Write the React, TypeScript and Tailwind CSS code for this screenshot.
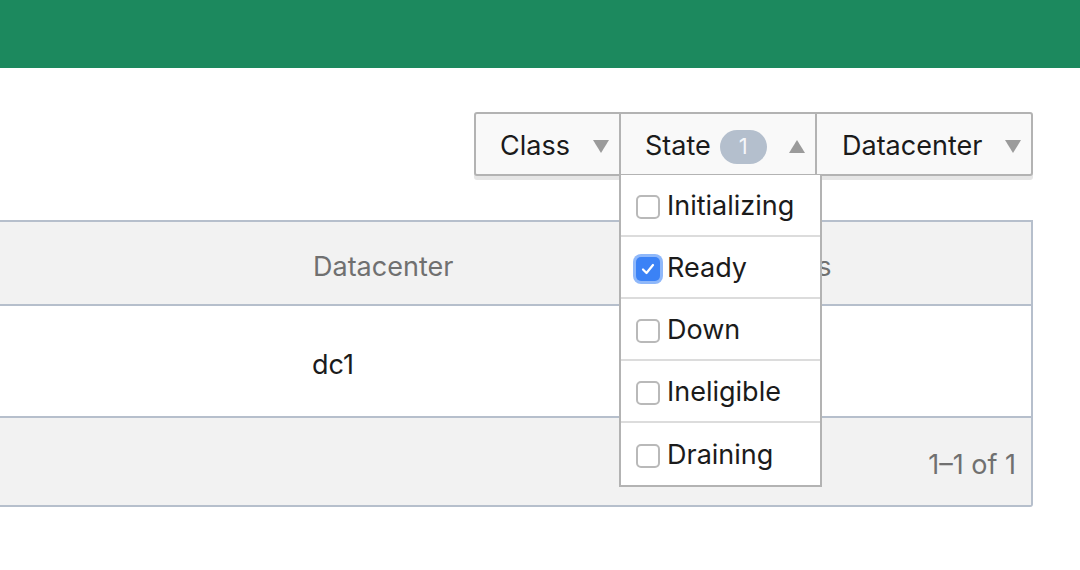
import React from 'react';

const font = { fontFamily: 'Inter, "Noto Sans", sans-serif' };

function Caret({ up }: { up?: boolean }) {
  return (
    <svg width="16" height="13" viewBox="0 0 16 13" className="shrink-0">
      {up ? <polygon points="8,0 16,13 0,13" fill="#9b9b9b" /> : <polygon points="0,0 16,0 8,13" fill="#9b9b9b" />}
    </svg>
  );
}

function Checkbox({ checked }: { checked?: boolean }) {
  if (checked) {
    return (
      <span className="flex h-[24px] w-[24px] shrink-0 items-center justify-center rounded-[5px] bg-[#3b82f6] ring-[3px] ring-[#8fb8fa]">
        <svg width="14" height="12" viewBox="0 0 14 12">
          <path d="M2 6.5 L5.5 10 L12 2" stroke="white" strokeWidth="2.2" fill="none" strokeLinecap="round" strokeLinejoin="round" />
        </svg>
      </span>
    );
  }
  return <span className="block h-[24px] w-[24px] shrink-0 rounded-[5px] border-2 border-[#b9b9b9] bg-white" />;
}

const states = [
  { label: 'Initializing', checked: false },
  { label: 'Ready', checked: true },
  { label: 'Down', checked: false },
  { label: 'Ineligible', checked: false },
  { label: 'Draining', checked: false },
];

export default function App() {
  return (
    <div className="relative h-[570px] w-[1080px] overflow-hidden bg-white text-[27px] text-[#1b1b1b]" style={font}>
      <div className="h-[68px] bg-[#1c895e]" />

      <div className="flex justify-end pr-[47px] pt-[44px]">
        <div className="flex h-[64px] rounded-[3px] border-2 border-[#b3b3b3] bg-[#f9f9f9] shadow-[0_4px_0_#e6e6e6]">
          <div className="flex w-[143px] items-center justify-between pl-[24px] pr-[10px] pt-[5px]">
            <span>Class</span>
            <Caret />
          </div>
          <div className="flex w-[196px] items-center border-l-2 border-[#b3b3b3] pl-[24px] pr-[10px] pt-[5px]">
            <span>State</span>
            <span className="ml-[9px] flex h-[34px] w-[47px] items-center justify-center rounded-full bg-[#b4bfcd] text-[22px] text-[#f4f6f9]">1</span>
            <span className="ml-auto"><Caret up /></span>
          </div>
          <div className="flex w-[216px] items-center justify-between border-l-2 border-[#b3b3b3] pl-[25px] pr-[10px] pt-[5px]">
            <span>Datacenter</span>
            <Caret />
          </div>
        </div>
      </div>

      <div className="mr-[47px] mt-[44px] rounded-br-[3px] border-b-2 border-r-2 border-t-2 border-[#b6bfcc]">
        <div className="flex h-[84px] items-center border-b-2 border-[#b6bfcc] bg-[#f2f2f2] pt-[9px] text-[#707070]">
          <span className="w-[313px] shrink-0" />
          <span className="w-[438px] shrink-0">Datacenter</span>
          <span>Status</span>
        </div>
        <div className="flex h-[112px] items-center border-b-2 border-[#b6bfcc] pt-[9px]">
          <span className="w-[312px] shrink-0" />
          <span>dc1</span>
        </div>
        <div className="flex h-[87px] items-center justify-end bg-[#f2f2f2] pr-[15px] pt-[8px] text-[#707070]">
          <span>1–1 of 1</span>
        </div>
      </div>

      <div className="absolute left-[619px] top-[175px] w-[203px] border-2 border-t-0 border-[#b3b3b3] bg-white">
        {states.map((s, i) => (
          <div
            key={s.label}
            className={`flex h-[62px] items-center gap-[7px] pl-[15px] pt-[3px] ${i < states.length - 1 ? 'border-b-2 border-[#dcdcdc]' : ''}`}
          >
            <Checkbox checked={s.checked} />
            <span>{s.label}</span>
          </div>
        ))}
      </div>
    </div>
  );
}
